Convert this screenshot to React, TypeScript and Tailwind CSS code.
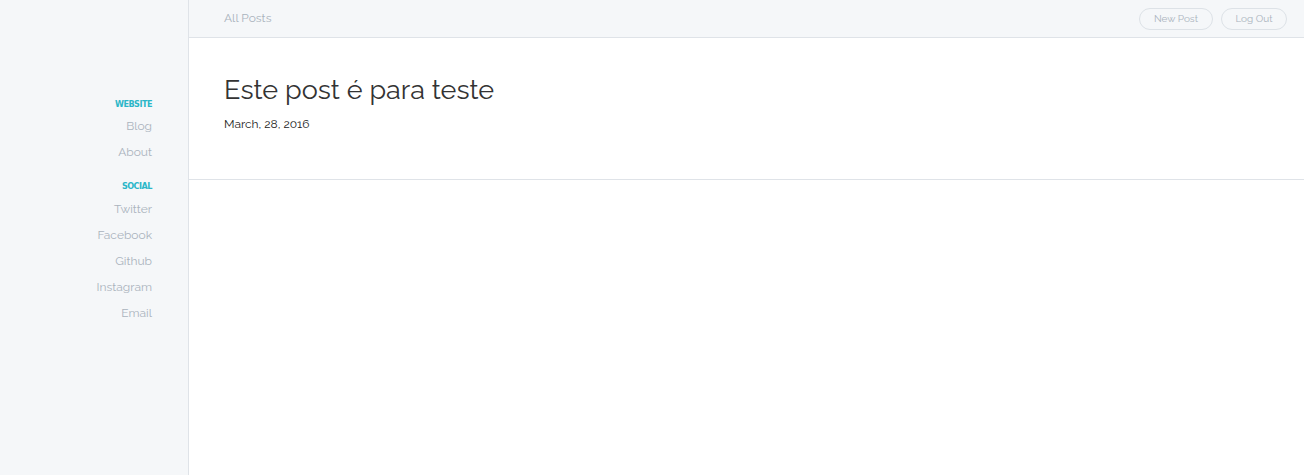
export default function App() {
  const font = { fontFamily: 'Raleway, Lato, "Open Sans", sans-serif' };
  const label = { fontFamily: '"Liberation Sans Narrow", "DejaVu Sans Condensed", sans-serif' };
  return (
    <div className="flex min-h-[475px] w-full bg-white" style={font}>
      <aside className="w-[189px] shrink-0 border-r border-[#dfe3e8] bg-[#f5f7f9] pr-[36px] pt-[98px] text-right">
        <div className="text-[9px] font-bold leading-[12px] tracking-[-0.5px] text-[#2bb6c8]" style={label}>WEBSITE</div>
        <ul className="mt-[3px] text-[12px] leading-[26px] text-[#aab3bd]">
          <li>Blog</li>
          <li>About</li>
        </ul>
        <div className="mt-[15px] text-[9px] font-bold leading-[12px] tracking-[-0.5px] text-[#2bb6c8]" style={label}>SOCIAL</div>
        <ul className="mt-[4px] text-[12px] leading-[26px] text-[#aab3bd]">
          <li>Twitter</li>
          <li>Facebook</li>
          <li>Github</li>
          <li>Instagram</li>
          <li>Email</li>
        </ul>
      </aside>
      <main className="flex flex-1 flex-col">
        <header className="flex h-[38px] items-center justify-between border-b border-[#dfe3e8] bg-[#f5f7f9] pl-[35px] pr-[17px]">
          <span className="-mt-[2px] text-[12px] text-[#aab3bd]">All Posts</span>
          <div className="flex gap-[8px]">
            <button className="h-[22px] w-[74px] rounded-full border border-[#dde2e7] text-[10px] text-[#aab3bd]">New Post</button>
            <button className="h-[22px] w-[66px] rounded-full border border-[#dde2e7] text-[10px] text-[#aab3bd]">Log Out</button>
          </div>
        </header>
        <article className="h-[142px] border-b border-[#dfe3e8] pl-[35px] pt-[34px]">
          <h1 className="text-[27px] font-normal leading-[36px] text-[#333]">Este post é para teste</h1>
          <p className="mt-[8px] text-[12px] leading-[16px] text-[#222]">March, 28, 2016</p>
        </article>
      </main>
    </div>
  );
}
